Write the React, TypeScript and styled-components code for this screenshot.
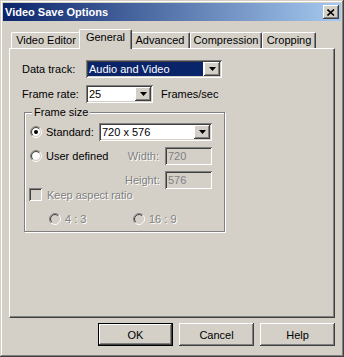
import styled, { createGlobalStyle } from "styled-components";

const face = "#d4d0c8";
const shadow = "#808080";
const darkShadow = "#404040";

const GlobalStyle = createGlobalStyle`
  html, body {
    margin: 0;
    padding: 0;
    background: ${face};
  }
  body {
    font-family: "Liberation Sans", Arial, sans-serif;
    font-size: 11px;
    color: #000;
  }
`;

const raised = `
  box-shadow: inset -1px -1px ${darkShadow}, inset 1px 1px #fff,
    inset -2px -2px ${shadow}, inset 2px 2px ${face};
`;

const sunken = `
  box-shadow: inset 1px 1px ${shadow}, inset -1px -1px #fff,
    inset 2px 2px ${darkShadow}, inset -2px -2px ${face};
`;

const Window = styled.div`
  width: 344px;
  height: 357px;
  box-sizing: border-box;
  padding: 3px;
  background: ${face};
  box-shadow: inset -1px -1px ${darkShadow}, inset 1px 1px ${face},
    inset -2px -2px ${shadow}, inset 2px 2px #fff;
  display: flex;
  flex-direction: column;
`;

const TitleBar = styled.div`
  height: 18px;
  flex-shrink: 0;
  display: flex;
  align-items: center;
  justify-content: space-between;
  padding: 0 2px 0 2px;
  background: linear-gradient(to right, #0a246a, #a6caf0);
  color: #fff;
  font-weight: bold;
  font-size: 11px;
`;

const CloseButton = styled.div`
  width: 16px;
  height: 14px;
  background: ${face};
  ${raised}
  display: flex;
  align-items: center;
  justify-content: center;
`;

const Body = styled.div`
  flex: 1;
  display: flex;
  flex-direction: column;
  padding: 8px 6px 0;
`;

const TabRow = styled.div`
  height: 19px;
  display: flex;
  align-items: flex-end;
  padding-left: 2px;
`;

const Tab = styled.div<{ $active?: boolean; $w: number }>`
  box-sizing: border-box;
  width: ${(p) => p.$w + (p.$active ? 4 : 0)}px;
  height: ${(p) => (p.$active ? 20 : 16)}px;
  margin: 0 ${(p) => (p.$active ? -2 : 0)}px ${(p) => (p.$active ? -1 : 0)}px;
  position: relative;
  z-index: ${(p) => (p.$active ? 1 : 0)};
  background: ${face};
  border-top: 1px solid #fff;
  border-left: 1px solid #fff;
  border-right: 1px solid ${darkShadow};
  border-radius: 2px 2px 0 0;
  box-shadow: inset -1px 0 ${shadow};
  display: flex;
  justify-content: center;
  padding-top: ${(p) => (p.$active ? 1 : 1)}px;
  line-height: 13px;
  white-space: nowrap;
`;

const Panel = styled.div`
  height: 270px;
  box-sizing: border-box;
  border-top: 1px solid #fff;
  border-left: 1px solid #fff;
  border-right: 1px solid ${darkShadow};
  border-bottom: 1px solid ${darkShadow};
  box-shadow: inset -1px -1px ${shadow};
  padding: 11px 0 0 12px;
  display: flex;
  flex-direction: column;
`;

const FieldRow = styled.div<{ $gap?: number }>`
  display: flex;
  align-items: center;
  height: 18px;
  margin-top: ${(p) => p.$gap ?? 0}px;
`;

const Label = styled.span<{ $w?: number; $disabled?: boolean; $right?: boolean }>`
  display: inline-block;
  width: ${(p) => (p.$w ? `${p.$w}px` : "auto")};
  text-align: ${(p) => (p.$right ? "right" : "left")};
  padding-right: ${(p) => (p.$right ? 6 : 0)}px;
  box-sizing: border-box;
  white-space: nowrap;
  color: ${(p) => (p.$disabled ? shadow : "#000")};
  text-shadow: ${(p) => (p.$disabled ? "1px 1px 0 #fff" : "none")};
`;

const Suffix = styled.span`
  margin-left: 8px;
`;

const ComboFrame = styled.div<{ $w: number }>`
  width: ${(p) => p.$w}px;
  height: 18px;
  box-sizing: border-box;
  padding: 2px;
  background: #fff;
  ${sunken}
  display: flex;
  grid-column: span 3;
`;

const ComboValue = styled.div<{ $selected?: boolean }>`
  flex: 1;
  display: flex;
  align-items: center;
  padding-left: 1px;
  margin-right: 1px;
  background: ${(p) => (p.$selected ? "#0a246a" : "transparent")};
  color: ${(p) => (p.$selected ? "#fff" : "#000")};
  white-space: nowrap;
`;

const ComboButton = styled.div`
  width: 16px;
  background: ${face};
  ${raised}
  display: flex;
  align-items: center;
  justify-content: center;
`;

const EditBox = styled.div`
  width: 47px;
  height: 18px;
  box-sizing: border-box;
  padding: 0 3px;
  background: ${face};
  color: ${shadow};
  ${sunken}
  display: flex;
  align-items: center;
`;

const GroupBox = styled.fieldset`
  width: 201px;
  box-sizing: border-box;
  margin: 3px 0 0 2px;
  padding: 0;
  min-width: 0;
  border: 1px solid ${shadow};
  box-shadow: 1px 1px 0 #fff, inset 1px 1px 0 #fff;
`;

const Legend = styled.legend`
  margin-left: 7px;
  padding: 0 2px;
  line-height: 13px;
  background: ${face};
`;

const GroupGrid = styled.div`
  display: grid;
  grid-template-columns: 69px 26px 40px 47px;
  grid-auto-rows: 18px;
  row-gap: 6px;
  align-items: center;
  padding: 4px 0 0 5px;
`;

const Option = styled.label<{ $span?: number; $w?: number }>`
  display: flex;
  align-items: center;
  gap: 4px;
  white-space: nowrap;
  grid-column: span ${(p) => p.$span ?? 1};
  width: ${(p) => (p.$w ? `${p.$w}px` : "auto")};
`;

const CheckRow = styled.div`
  display: flex;
  align-items: center;
  gap: 5px;
  height: 13px;
  margin: -1px 0 0 4px;
`;

const CheckBox = styled.span`
  width: 13px;
  height: 13px;
  box-sizing: border-box;
  background: ${face};
  ${sunken}
`;

const RatioRow = styled.div`
  display: flex;
  align-items: center;
  height: 13px;
  margin: 11px 0 6px 24px;
`;

const Footer = styled.div`
  display: flex;
  justify-content: flex-end;
  gap: 6px;
  margin-top: 5px;
`;

const Button = styled.div<{ $default?: boolean }>`
  width: 75px;
  height: 23px;
  box-sizing: border-box;
  background: ${face};
  display: flex;
  align-items: center;
  justify-content: center;
  ${(p) =>
    p.$default
      ? `border: 1px solid #000;
         box-shadow: inset -1px -1px ${darkShadow}, inset 1px 1px #fff,
           inset -2px -2px ${shadow}, inset 2px 2px ${face};`
      : raised}
`;

function Arrow() {
  return (
    <svg width="7" height="4" viewBox="0 0 7 4">
      <path d="M0 0H7L3.5 4Z" fill="#000" />
    </svg>
  );
}

function Combo({ w, value, selected }: { w: number; value: string; selected?: boolean }) {
  return (
    <ComboFrame $w={w}>
      <ComboValue $selected={selected}>{value}</ComboValue>
      <ComboButton>
        <Arrow />
      </ComboButton>
    </ComboFrame>
  );
}

function Radio({ checked, disabled }: { checked?: boolean; disabled?: boolean }) {
  const a = 5.5 * 0.7071;
  const b = 4.5 * 0.7071;
  return (
    <svg width="12" height="12" viewBox="0 0 12 12" style={{ flexShrink: 0 }}>
      <circle cx="6" cy="6" r="4" fill={disabled ? face : "#fff"} />
      <path d={`M${6 - a} ${6 + a}A5.5 5.5 0 0 1 ${6 + a} ${6 - a}`} stroke={shadow} fill="none" />
      <path d={`M${6 + a} ${6 - a}A5.5 5.5 0 0 1 ${6 - a} ${6 + a}`} stroke="#fff" fill="none" />
      <path d={`M${6 - b} ${6 + b}A4.5 4.5 0 0 1 ${6 + b} ${6 - b}`} stroke={darkShadow} fill="none" />
      <path d={`M${6 + b} ${6 - b}A4.5 4.5 0 0 1 ${6 - b} ${6 + b}`} stroke={face} fill="none" />
      {checked && <circle cx="6" cy="6" r="2" fill={disabled ? shadow : "#000"} />}
    </svg>
  );
}

export default function App() {
  return (
    <Window>
      <GlobalStyle />
      <TitleBar>
        <span>Video Save Options</span>
        <CloseButton>
          <svg width="8" height="7" viewBox="0 0 8 7">
            <path d="M0.5 0.5L7 6.5M7 0.5L0.5 6.5" stroke="#000" strokeWidth="1.6" />
          </svg>
        </CloseButton>
      </TitleBar>
      <Body>
        <TabRow>
          <Tab $w={70}>Video Editor</Tab>
          <Tab $w={49} $active>
            General
          </Tab>
          <Tab $w={60}>Advanced</Tab>
          <Tab $w={72}>Compression</Tab>
          <Tab $w={54}>Cropping</Tab>
        </TabRow>
        <Panel>
          <FieldRow>
            <Label $w={64}>Data track:</Label>
            <Combo w={136} value="Audio and Video" selected />
          </FieldRow>
          <FieldRow $gap={7}>
            <Label $w={64}>Frame rate:</Label>
            <Combo w={67} value="25" />
            <Suffix>Frames/sec</Suffix>
          </FieldRow>
          <GroupBox>
            <Legend>Frame size</Legend>
            <GroupGrid>
              <Option>
                <Radio checked />
                Standard:
              </Option>
              <Combo w={113} value="720 x 576" />
              <Option $span={2}>
                <Radio />
                User defined
              </Option>
              <Label $right $disabled>
                Width:
              </Label>
              <EditBox>720</EditBox>
              <span />
              <span />
              <Label $right $disabled>
                Height:
              </Label>
              <EditBox>576</EditBox>
            </GroupGrid>
            <CheckRow>
              <CheckBox />
              <Label $disabled>Keep aspect ratio</Label>
            </CheckRow>
            <RatioRow>
              <Option $w={84}>
                <Radio disabled />
                <Label $disabled>4 : 3</Label>
              </Option>
              <Option>
                <Radio disabled />
                <Label $disabled>16 : 9</Label>
              </Option>
            </RatioRow>
          </GroupBox>
        </Panel>
        <Footer>
          <Button $default>OK</Button>
          <Button>Cancel</Button>
          <Button>Help</Button>
        </Footer>
      </Body>
    </Window>
  );
}
